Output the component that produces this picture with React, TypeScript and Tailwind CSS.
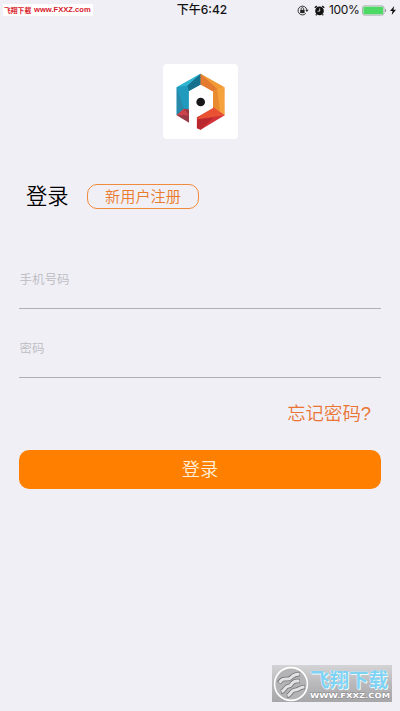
import React from 'react';

const cjk = "font-['Liberation_Sans','Noto_Sans_CJK_SC',sans-serif]";

function StatusBar() {
  return (
    <header className="relative flex h-5 items-center justify-center text-[#111]">
      <div className="absolute left-[3px] top-1 flex h-3 w-[90px] items-center gap-[3px] bg-white pl-px font-['Noto_Sans_CJK_SC',sans-serif] font-bold text-[#d8202a]">
        <span className="w-[27px] whitespace-nowrap text-[6.8px] leading-3">飞翔下载</span>
        <span className="whitespace-nowrap font-['Liberation_Sans',sans-serif] text-[7.6px] leading-3">
          www.FXXZ.com
        </span>
      </div>

      <span className="ml-1 whitespace-nowrap font-['Inter','Noto_Sans_CJK_SC',sans-serif] text-[12px] font-medium leading-5">
        下午6:42
      </span>

      <div className="absolute right-1 top-0 flex h-5 items-center">
        <LockIcon />
        <AlarmIcon />
        <span className="ml-1 w-[33px] whitespace-nowrap font-['Inter',sans-serif] text-[12px] leading-5 tracking-[-0.3px]">100%</span>
        <BatteryIcon />
        <svg className="ml-[3px]" width="6" height="9" viewBox="0 0 6 9">
          <path d="M4.2 0 0 5h2.5L1.7 9 6 3.8H3.4z" fill="#111" />
        </svg>
      </div>
    </header>
  );
}

function LockIcon() {
  return (
    <svg className="-ml-[2px]" width="12" height="11" viewBox="0 0 12 11" fill="none" stroke="#222">
      <path d="M8.8 8.4A4.4 4.4 0 1 1 9.8 4.8" strokeWidth="0.9" />
      <path d="M8.300 4.800h3.200L9.900 6.900z" fill="#222" stroke="none" />
      <rect x="3.200" y="4.900" width="4.400" height="3.200" fill="#222" stroke="none" />
      <path d="M4.100 5V3.900a1.300 1.300 0 0 1 2.600 0V5" strokeWidth="0.8" />
    </svg>
  );
}

function AlarmIcon() {
  return (
    <svg className="ml-[5px]" width="11" height="11" viewBox="0 0 11 11" fill="none">
      <circle cx="5.5" cy="5.9" r="4.3" fill="#111" />
      <path d="M.8 2.800 2.800 1.100M8.200 1.100l2 1.700M2.600 9.400l-.8.900M8.400 9.400l.8.900" stroke="#111" strokeWidth="1.400" />
      <path d="M5.700 3.400v2.800H3.600" stroke="#f0eff5" strokeWidth="0.8" />
    </svg>
  );
}

function BatteryIcon() {
  return (
    <svg width="25" height="11" viewBox="0 0 25 11" fill="none">
      <rect x="0.5" y="0.9" width="21.5" height="9.2" rx="2" stroke="#8d9791" strokeWidth="0.7" />
      <rect x="1.4" y="1.8" width="19.7" height="7.4" rx="1.2" fill="#4cd964" />
      <path d="M23 3.8c1.5.5 1.5 2.9 0 3.4z" fill="#8d9791" />
    </svg>
  );
}

function Logo() {
  return (
    <svg className="block h-[75px] w-[75px]" viewBox="22 18 225 225">
      {/* blue side */}
      <path d="M63 88 135 47v33l-36 20v54L63 172z" fill="#23a3c6" />
      <path d="M63 88 135 47l-40 36z" fill="#2fb4d2" />
      <path d="m95 83 40-36 14 17-14 16-36 20z" fill="#16718f" />
      <path d="m63 88 32-5 4 17v54l-14-2z" fill="#219abd" />
      <path d="m63 88 22 64-22 20z" fill="#2889ab" />
      {/* orange side */}
      <path d="m135 47 72 41-34 12-38-20z" fill="#f09a35" />
      <path d="m135 47 50 46-13 8-37-21z" fill="#e47931" />
      <path d="M185 93 207 88v84l-35-22v-50z" fill="#f6a23c" />
      <path d="m185 93 8 66-21-9v-50z" fill="#e98b31" />
      {/* red base */}
      <path d="m172 148 35 24-72 43-12-5v-32l12-7z" fill="#d33238" />
      <path d="m172 148 35 24-82 12 10-12z" fill="#e85232" />
      <path d="m125 184 48-5-38 36-12-5z" fill="#b9282f" />
      <path d="M63 172 85 152l15 2v40z" fill="#993a45" />
      <path d="m63 172 22-20 15 20z" fill="#cb4348" />
      {/* letter bowl and stem */}
      <path d="m135 80 37 21v49l-37 21-12 7v37l-23-18v-97z" fill="#fff" />
      <circle cx="135" cy="132" r="13" fill="#171719" />
    </svg>
  );
}

function Field({ label, type }: { label: string; type: string }) {
  return (
    <input
      type={type}
      placeholder={label}
      className={`${cjk} block h-[69px] w-full border-b border-[#b0afb5] bg-transparent pl-[0.5px] pt-[11px] text-[12.5px] font-[350] text-[#555] outline-none placeholder:text-[#bcbbc2]`}
    />
  );
}

function Watermark() {
  return (
    <div className="absolute left-[272px] top-[665px] flex h-[37px] w-[120px] items-center bg-gradient-to-b from-[#d4d4d7] via-[#b9b9bc] to-[#a7a7aa]">
      <svg className="ml-px shrink-0" width="36" height="36" viewBox="0 0 36 36" fill="none">
        <circle cx="18" cy="18" r="16.4" fill="#b4b4b7" stroke="#fff" strokeWidth="1.6" />
        <g stroke="#707073" strokeWidth="4.6" strokeLinejoin="round">
          <path d="M6 17c3-5 5-4 9-4s3-5 12-5" />
          <path d="M8 26c4-1 4-6 8-6 3 0 2-5 8-5h3" />
          <path d="M14 30c4-1 4-6 8-6s4-3 10-3" />
        </g>
        <g stroke="#e3e3e5" strokeWidth="3" strokeLinejoin="round">
          <path d="M6.500 16.800c2.500-4.500 4.500-3.800 8.500-3.800s3-5 11.500-5" />
          <path d="M8.500 25.800c3.500-1 3.500-5.800 7.500-5.800 3 0 2-5 8-5h2.500" />
          <path d="M14.500 29.800c3.500-1 3.500-5.800 7.500-5.800s4-3 9.500-3" />
        </g>
      </svg>
      <div className="ml-[1px] flex flex-col">
        <span className="h-[22px] whitespace-nowrap font-['Noto_Sans_CJK_SC',sans-serif] text-[19.5px] font-bold leading-[22px] text-[#7ed3f4] [text-shadow:0_0_1px_#fff,1px_1px_0_#edf8fc]">
          飞翔下载
        </span>
        <svg width="81" height="9" viewBox="0 0 81 9">
          <text
            x="0"
            y="7.5"
            textLength="80"
            lengthAdjust="spacingAndGlyphs"
            fill="#fff"
            stroke="#88888b"
            strokeWidth="0.8"
            paintOrder="stroke"
            className="font-['DejaVu_Sans',sans-serif] text-[7px] font-bold"
          >
            WWW.FXXZ.COM
          </text>
        </svg>
      </div>
    </div>
  );
}

export default function App() {
  return (
    <div className="relative h-[711px] w-[400px] overflow-hidden bg-[#f0eff5]">
      <StatusBar />

      <main className="px-[19px]">
        <div className="mx-auto mt-11 h-[75px] w-[75px] overflow-hidden rounded bg-white">
          <Logo />
        </div>

        <div className="mt-11 flex h-[26px] items-center pl-[7px]">
          <h1 className={`${cjk} w-[61px] pt-[2px] text-[21.3px] font-[350] leading-[26px] text-black`}>登录</h1>
          <button
            className={`${cjk} flex h-[25px] w-[112px] items-center justify-center rounded-[10px] border border-[#f08a3c] pt-px text-[15.2px] font-[350] leading-none text-[#ea7a2c]`}
          >
            新用户注册
          </button>
        </div>

        <form className="mt-[31px]">
          <Field label="手机号码" type="text" />
          <Field label="密码" type="password" />

          <a href="#" className={`${cjk} mr-[10px] mt-[22px] block text-right text-[18.4px] font-[350] leading-[28px] text-[#ea7433]`}>
            忘记密码?
          </a>

          <button
            type="button"
            className={`${cjk} mt-[22px] flex h-[39px] w-full items-center justify-center rounded-[10px] bg-[#ff8000] pt-px text-[18.3px] font-[350] leading-none text-[#fff0dc]`}
          >
            登录
          </button>
        </form>
      </main>

      <Watermark />
    </div>
  );
}
